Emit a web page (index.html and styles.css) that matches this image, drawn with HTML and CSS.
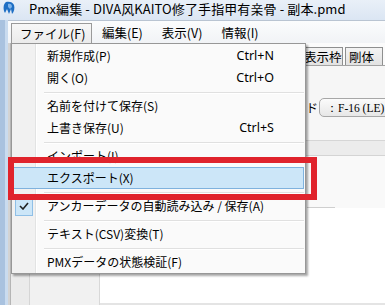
FILE: index.html
```html
<!DOCTYPE html>
<html lang="ja">
<head>
<meta charset="utf-8">
<title>Pmx編集</title>
<link rel="stylesheet" href="styles.css">
</head>
<body>
<div class="window">
  <header class="titlebar">
    <svg class="app-icon" width="14" height="14" viewBox="0 0 14 14">
      <path d="M4 1 C7 0 11 1 12 4 C13 7 12 11 10 13 L9 8 L7 13 L5 8 L3 12 C1 9 1 3 4 1 Z" fill="#1f6fc4"/>
      <path d="M6 3 C8 2 10 3 10 6 L8 8 L6 6 Z" fill="#7fb4ea"/>
    </svg>
    <span class="title-text">Pmx編集 - DIVA风KAITO修了手指甲有亲骨 - 副本.pmd</span>
  </header>
  <div class="frame">
    <div class="frame-left"></div>
    <div class="client">
      <nav class="menubar">
        <span class="menu-item is-open">ファイル(F)</span>
        <span class="menu-item">編集(E)</span>
        <span class="menu-item">表示(V)</span>
        <span class="menu-item">情報(I)</span>
      </nav>
      <div class="workspace">
        <div class="sidepanel">
          <div class="side-col side-col-a"></div>
          <div class="side-col side-col-b"></div>
        </div>
        <div class="mainpanel">
          <div class="tabs">
            <span class="tab">表示枠</span>
            <span class="tab">剛体</span>
          </div>
          <div class="form-area">
            <div class="form-row">
              <span class="form-label">座標モード</span>
              <span class="combo">：F-16 (LE)</span>
            </div>
          </div>
          <div class="band"></div>
          <div class="subarea">
            <div class="sub-line"></div>
          </div>
          <div class="list"></div>
        </div>
      </div>
    </div>
  </div>
</div>

<div class="dropdown">
  <div class="dd-item"><span>新規作成(P)</span><span class="dd-key">Ctrl+N</span></div>
  <div class="dd-item"><span>開く(O)</span><span class="dd-key">Ctrl+O</span></div>
  <div class="dd-sep"></div>
  <div class="dd-item"><span>名前を付けて保存(S)</span><span class="dd-key"></span></div>
  <div class="dd-item"><span>上書き保存(U)</span><span class="dd-key">Ctrl+S</span></div>
  <div class="dd-sep"></div>
  <div class="dd-item"><span>インポート(I)</span><span class="dd-key"></span></div>
  <div class="dd-item is-hot"><span>エクスポート(X)</span><span class="dd-key"></span></div>
  <div class="dd-sep"></div>
  <div class="dd-item is-checked">
    <span class="dd-check">
      <svg width="10" height="8" viewBox="0 0 10 8"><path d="M1 4 L4 7 L9 1" fill="none" stroke="#222" stroke-width="1.6"/></svg>
    </span>
    <span>アンカーデータの自動読み込み / 保存(A)</span><span class="dd-key"></span>
  </div>
  <div class="dd-sep"></div>
  <div class="dd-item"><span>テキスト(CSV)変換(T)</span><span class="dd-key"></span></div>
  <div class="dd-sep"></div>
  <div class="dd-item"><span>PMXデータの状態検証(F)</span><span class="dd-key"></span></div>
</div>

<div class="annotation"></div>
</body>
</html>
```

FILE: styles.css
```css
* { box-sizing: border-box; }

html, body {
  margin: 0;
  padding: 0;
}

body {
  width: 385px;
  height: 305px;
  overflow: hidden;
  position: relative;
  background: #ffffff;
  font-family: "Noto Sans CJK JP", "Noto Sans", sans-serif;
  font-size: 12px;
  color: #000;
}

.window {
  display: flex;
  flex-direction: column;
  height: 305px;
}

/* Title bar */
.titlebar {
  height: 20px;
  display: flex;
  align-items: center;
  gap: 13px;
  padding: 0 0 3px 2px;
  background: linear-gradient(#e9f0f8, #dbe6f3);
}

.app-icon { flex: none; margin-top: -2px; }

.title-text {
  font-size: 13px;
  line-height: 15px;
  white-space: nowrap;
  letter-spacing: 0.1px;
}

/* Frame */
.frame {
  flex: 1;
  display: flex;
  min-height: 0;
}

.frame-left {
  width: 8px;
  flex: none;
  background: linear-gradient(90deg, #a9c2df 0, #a9c2df 5px, #c9dbef 5px, #c9dbef 8px);
}

.client {
  flex: 1;
  display: flex;
  flex-direction: column;
  min-width: 0;
}

.menubar {
  height: 23px;
  flex: none;
  display: flex;
  align-items: flex-end;
  padding-left: 3px;
  border-top: 1px solid #b9c4d2;
  background: linear-gradient(#fbfcfd, #f1f3f6);
}

.menu-item {
  height: 20px;
  line-height: 19px;
  padding: 0 9px;
  margin-right: 1px;
  font-size: 12.5px;
  white-space: nowrap;
}

.menu-item.is-open {
  width: 81px;
  padding-left: 8px;
  border: 1px solid #9a9a9a;
  border-bottom: none;
  background: linear-gradient(#f7f7f7, #ebebeb);
}

.workspace {
  flex: 1;
  display: flex;
  min-height: 0;
}

/* left side panel */
.sidepanel {
  width: 92px;
  flex: none;
  display: flex;
  border-left: 2px solid #d3d3d3;
  border-right: 1px solid #d8d8d8;
  background: #eeeeee;
}

.side-col-a {
  width: 20px;
  border-left: 1px solid #b5b5b5;
  border-right: 1px solid #d5d5d5;
  background: #ebebeb;
}

.side-col-b {
  flex: 1;
  background: #f1f1f1;
}

/* main panel */
.mainpanel {
  flex: 1;
  display: flex;
  flex-direction: column;
  min-width: 0;
  background: #f4f4f4;
}

.tabs {
  height: 23px;
  flex: none;
  display: flex;
  align-items: flex-end;
  padding-left: 198px;
  padding-top: 5px;
  background: #fbfbfb;
  border-bottom: 1px solid #a3a3a3;
  overflow: hidden;
}

.tab {
  height: 18px;
  line-height: 17px;
  padding: 0 5px;
  border: 1px solid #8e8f8f;
  border-bottom: none;
  margin-right: 2px;
  white-space: nowrap;
  font-size: 12.5px;
  background: linear-gradient(#f3f3f3, #e2e2e2);
}

.tab:first-child { width: 45px; text-align: right; }
.tab:last-child { width: 60px; padding-left: 3px; }

.form-area {
  height: 54px;
  flex: none;
  display: flex;
  align-items: flex-end;
  padding-bottom: 3px;
  background: #f6f6f6;
}

.form-row {
  display: flex;
  align-items: center;
  gap: 0;
  padding-left: 158px;
  white-space: nowrap;
}

.form-label {
  font-size: 12px;
  line-height: 19px;
}

.combo {
  height: 19px;
  line-height: 18px;
  width: 100px;
  padding-left: 6px;
  margin-left: 1px;
  border: 1px solid #a7a7a7;
  border-radius: 5px 0 0 5px;
  background: linear-gradient(#fbfbfb, #e7e7e7);
  font-family: "Liberation Serif", serif;
  font-size: 11.5px;
}

.band {
  height: 36px;
  flex: none;
  border-top: 20px solid #f7f7f7;
  border-bottom: 1px solid #d4d4d4;
  background: #ececec;
  box-shadow: inset 0 1px 0 #d6d6d6;
}

.subarea {
  height: 52px;
  flex: none;
  background: #f9f9f9;
  display: flex;
  align-items: flex-end;
}

.sub-line {
  width: 28px;
  height: 1px;
  margin-left: 207px;
  background: #cfcfcf;
}

.list {
  flex: 1;
  background: #ffffff;
  border-bottom: 2px solid #e4e4e4;
}

/* Dropdown menu */
.dropdown {
  position: absolute;
  left: 11px;
  top: 43px;
  width: 295px;
  height: 231px;
  padding: 1px;
  border: 1px solid #979797;
  background:
    linear-gradient(90deg, #f1f1f1 0, #f1f1f1 23px, #e2e3e3 23px, #e2e3e3 24px, #ffffff 24px, #ffffff 25px, #fafafa 25px);
  box-shadow: 2px 2px 2px rgba(0, 0, 0, 0.35);
}

.dd-item {
  position: relative;
  height: 22px;
  display: flex;
  align-items: center;
  justify-content: space-between;
  padding-left: 34px;
  padding-right: 30px;
  font-size: 12px;
  line-height: 22px;
  white-space: nowrap;
}

.dd-key {
  font-family: "Noto Sans", sans-serif;
  font-size: 12.5px;
}

.dd-item.is-hot {
  background: #cce6f8;
  border: 1px solid #7fb2de;
  padding-left: 33px;
  padding-right: 29px;
}

.dd-sep {
  height: 6px;
  margin-left: 31px;
  display: flex;
  flex-direction: column;
  justify-content: center;
}

.dd-sep::before {
  content: "";
  display: block;
  height: 1px;
  background: #e0e0e0;
  box-shadow: 0 1px 0 #ffffff;
}

.dd-check {
  position: absolute;
  left: 2px;
  top: 1px;
  width: 18px;
  height: 20px;
  display: flex;
  align-items: center;
  justify-content: center;
  background: #cce6f8;
  border: 1px solid #8fbfe6;
}

/* Red annotation frame */
.annotation {
  position: absolute;
  left: 8px;
  top: 157px;
  width: 309px;
  height: 43px;
  border: 6px solid #e0232c;
}
```
